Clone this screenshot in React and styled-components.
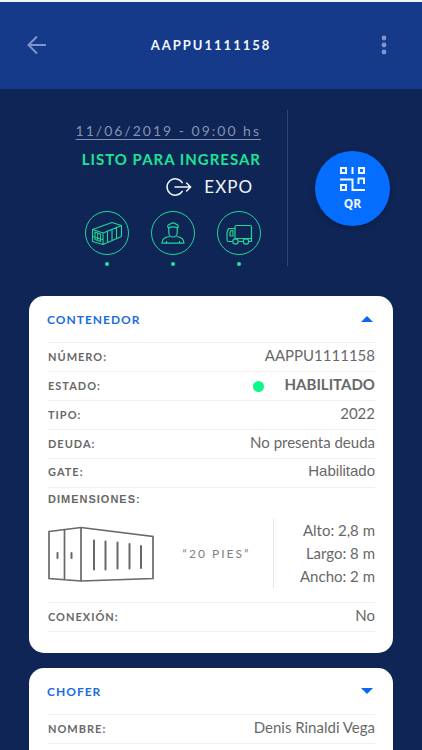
import { useState } from "react";
import styled, { createGlobalStyle } from "styled-components";

const GlobalStyle = createGlobalStyle`
  *,
  *::before,
  *::after {
    box-sizing: border-box;
  }

  body {
    margin: 0;
    background-color: #0e2556;
    font-family: Lato, "Liberation Sans", sans-serif;
  }

  button {
    font-family: inherit;
    border: none;
    background: transparent;
    padding: 0;
    cursor: pointer;
  }
`;

const driverRows = [
  { label: "NOMBRE:", value: "Denis Rinaldi Vega" },
  { label: "DNI:", value: "20978448" },
];

function ArrowLeftIcon() {
  return (
    <svg width="20" height="20" viewBox="0 0 20 20" fill="none">
      <path
        d="M19 10H1.5M10 1.500L1.500 10l8.500 8.500"
        stroke="currentColor"
        strokeWidth="2"
      />
    </svg>
  );
}

function DotsIcon() {
  return (
    <svg width="6" height="20" viewBox="0 0 6 20" fill="currentColor">
      <circle cx="3" cy="3" r="2.400" />
      <circle cx="3" cy="10" r="2.400" />
      <circle cx="3" cy="17" r="2.400" />
    </svg>
  );
}

function ExpoIcon() {
  return (
    <svg width="26" height="18" viewBox="0 0 26 18" fill="none">
      <path
        d="M16.2 4.6A8.2 8.2 0 1 0 16.2 13.4M9 9h15.5M20.6 5l4 4-4 4"
        stroke="currentColor"
        strokeWidth="1.500"
        strokeLinecap="round"
      />
    </svg>
  );
}

function ContainerIcon() {
  return (
    <svg width="42" height="42" viewBox="1 1 42 42" fill="none">
      <path
        d="M7.500 18.500L27 11.500l9.500 3v11L18 33.500 7.500 30.500zM7.500 18.500l10.500 3.500 18.500-7.500M18 22v11.500M22.500 20.500v11M27 18.500v10.500M31.500 16.800v10.500M10 21v7.500l5.500 2V23zM12.700 22v7.500M7.500 25.500l10 3"
        stroke="currentColor"
        strokeWidth="1.100"
        strokeLinejoin="round"
      />
    </svg>
  );
}

function DriverIcon() {
  return (
    <svg width="42" height="42" viewBox="1 1 42 42" fill="none">
      <path
        d="M17.500 17c-1-1-1-2.500.2-3.200 1.300-.3 2.300-2 4.300-2s3 1.700 4.300 2c1.200.7 1.200 2.200.2 3.200-2.500-1.300-6.500-1.300-9 0zM17.800 17v4.500c0 2.500 1.700 4.500 4.200 4.500s4.200-2 4.200-4.500V17M18.500 25.500c-5 .5-7.500 2.700-7.500 6.700h22c0-4-2.500-6.200-7.500-6.700M15.500 30v2.200M28.500 30v2.200"
        stroke="currentColor"
        strokeWidth="1.200"
        strokeLinejoin="round"
      />
    </svg>
  );
}

function TruckIcon() {
  return (
    <svg width="42" height="42" viewBox="1 1 42 42" fill="none">
      <g stroke="currentColor" strokeWidth="1.200" strokeLinejoin="round">
        <path d="M15.500 30.500H11.500q-1.500 0-1.500-2V22l1.500-4.500h6.500M18 27.500V16q0-1.500 1.500-1.500H33q1.500 0 1.500 1.500v11.500zM34.500 27.500v3h-3M26 30.500h-4.500M16 19.500h-2l-1 2.500v3H16z" />
        <circle cx="18.500" cy="30.500" r="2.700" />
        <circle cx="29" cy="30.500" r="2.700" />
      </g>
    </svg>
  );
}

function QrIcon() {
  return (
    <svg width="25" height="25" viewBox="0 0 25 25" fill="none">
      <path
        d="M1 1h5v5H1zM19 1h5v5h-5zM12.500 0v7M0 12.500h12.500v10.500H25M18.500 17v-5.500H24V17M1 18h5v5H1z"
        stroke="currentColor"
        strokeWidth="2"
      />
    </svg>
  );
}

function ContainerDrawing() {
  return (
    <svg width="106" height="56" viewBox="0 0 106 56" fill="none">
      <path
        d="M1 5.500l32-4 72 9v42L33 55 1 52.500zM16.500 3.500v50M33 1.500V55"
        stroke="currentColor"
        strokeWidth="1.700"
      />
      <path
        d="M9.500 27v5M23.500 27v5M46 14.500v29M57.500 15.500v28M69.500 16.500v26M81.500 18v24.500M93 20v22"
        stroke="currentColor"
        strokeWidth="2"
        strokeLinecap="round"
      />
    </svg>
  );
}

function Row({ label, value, active, plain }) {
  return (
    <StyledRow>
      <StyledLabel>{label}</StyledLabel>
      <StyledValue $strong={active} $plain={plain}>
        {active && <StyledStateDot />}
        {value}
      </StyledValue>
    </StyledRow>
  );
}

export default function App() {
  const [isContainerUp, setIsContainerUp] = useState(true);
  const [isDriverUp, setIsDriverUp] = useState(false);

  return (
    <StyledScreen>
      <GlobalStyle />
      <StyledHeader>
        <StyledIconButton aria-label="Volver">
          <ArrowLeftIcon />
        </StyledIconButton>
        <StyledTitle>AAPPU1111158</StyledTitle>
        <StyledIconButton aria-label="Más opciones" $end>
          <DotsIcon />
        </StyledIconButton>
      </StyledHeader>

      <StyledSummary>
        <StyledDetails>
          <StyledDate>11/06/2019 - 09:00 hs</StyledDate>
          <StyledStatus>LISTO PARA INGRESAR</StyledStatus>
          <StyledOperation>
            <ExpoIcon />
            EXPO
          </StyledOperation>
          <StyledSteps>
            {[ContainerIcon, DriverIcon, TruckIcon].map((StepIcon, index) => (
              <StyledStep key={index}>
                <StyledStepCircle>
                  <StepIcon />
                </StyledStepCircle>
                <StyledStepDot />
              </StyledStep>
            ))}
          </StyledSteps>
        </StyledDetails>
        <StyledQrArea>
          <StyledQrButton>
            <QrIcon />
            QR
          </StyledQrButton>
        </StyledQrArea>
      </StyledSummary>

      <StyledCards>
        <StyledCard>
          <StyledCardHeader
            aria-expanded={isContainerUp}
            onClick={() => setIsContainerUp(!isContainerUp)}
          >
            CONTENEDOR
            <StyledCaret $up={isContainerUp} />
          </StyledCardHeader>
          <StyledList>
            <Row label="NÚMERO:" value="AAPPU1111158" />
            <Row label="ESTADO:" value="HABILITADO" active />
            <Row label="TIPO:" value="2022" />
            <Row label="DEUDA:" value="No presenta deuda" />
            <Row label="GATE:" value="Habilitado" plain />
            <StyledDimensions>
              <StyledLabel $plain>DIMENSIONES:</StyledLabel>
              <StyledDimensionsBody>
                <ContainerDrawing />
                <StyledFeet>“20 PIES”</StyledFeet>
                <StyledMeasures>
                  <span>Alto: 2,8 m</span>
                  <span>Largo: 8 m</span>
                  <span>Ancho: 2 m</span>
                </StyledMeasures>
              </StyledDimensionsBody>
            </StyledDimensions>
            <Row label="CONEXIÓN:" value="No" />
          </StyledList>
        </StyledCard>

        <StyledCard>
          <StyledCardHeader
            aria-expanded={isDriverUp}
            onClick={() => setIsDriverUp(!isDriverUp)}
          >
            CHOFER
            <StyledCaret $up={isDriverUp} />
          </StyledCardHeader>
          <StyledList>
            {driverRows.map(({ label, value }) => (
              <Row key={label} label={label} value={value} />
            ))}
          </StyledList>
        </StyledCard>
      </StyledCards>
    </StyledScreen>
  );
}

const StyledScreen = styled.main`
  height: 100vh;
  overflow-y: auto;
  scrollbar-width: none;
  background-color: #0e2556;
`;

const StyledHeader = styled.header`
  display: grid;
  grid-template-columns: 1fr auto 1fr;
  align-items: center;
  padding: 33px 27px 34px;
  border-top: 2px solid #f2f6fa;
  background-color: #163a8a;
`;

const StyledIconButton = styled.button`
  display: flex;
  justify-self: ${({ $end }) => ($end ? "end" : "start")};
  padding-right: ${({ $end }) => ($end ? "8px" : "0")};
  color: #8094cf;
`;

const StyledTitle = styled.h1`
  margin: 0;
  color: #f4f7ff;
  font-size: 13px;
  font-weight: 700;
  line-height: 20px;
  letter-spacing: 2px;
`;

const StyledSummary = styled.section`
  display: flex;
  padding: 21px 32px 30px 28px;
`;

const StyledDetails = styled.div`
  flex: 1;
  display: flex;
  flex-direction: column;
  align-items: flex-end;
  padding: 7px 26px 0 0;
  line-height: 28px;
`;

const StyledDate = styled.time`
  color: #8591b2;
  font-size: 14px;
  letter-spacing: 2px;
  text-decoration: underline;
  text-decoration-thickness: 1px;
  text-underline-offset: 3px;
`;

const StyledStatus = styled.strong`
  color: #1ee394;
  font-size: 15px;
  letter-spacing: 1px;
`;

const StyledOperation = styled.span`
  display: flex;
  align-items: center;
  gap: 12px;
  padding-right: 8px;
  color: #f2f5fb;
  font-size: 17px;
  letter-spacing: 1px;
`;

const StyledSteps = styled.div`
  display: flex;
  gap: 22px;
  margin-top: 10px;
`;

const StyledStep = styled.div`
  display: flex;
  flex-direction: column;
  align-items: center;
  gap: 7px;
`;

const StyledStepCircle = styled.span`
  display: flex;
  border: 1px solid #21d796;
  border-radius: 50%;
  color: #21d796;
`;

const StyledStepDot = styled.i`
  width: 4px;
  height: 4px;
  border-radius: 50%;
  background-color: #2be39c;
`;

const StyledQrArea = styled.div`
  display: flex;
  align-items: center;
  padding-left: 27px;
  border-left: 1px solid #32456f;
`;

const StyledQrButton = styled.button`
  display: flex;
  flex-direction: column;
  align-items: center;
  justify-content: center;
  gap: 5px;
  width: 75px;
  height: 75px;
  padding-top: 2px;
  border-radius: 50%;
  background-color: #056dff;
  box-shadow: 0 2px 6px rgba(0, 0, 0, 0.2);
  color: #f4f9ff;
  font-family: "Open Sans", sans-serif;
  font-size: 12px;
  font-weight: 700;
  line-height: 14px;
`;

const StyledCards = styled.div`
  display: flex;
  flex-direction: column;
  gap: 15px;
  padding: 0 29px 30px;
`;

const StyledCard = styled.section`
  padding: 0 18px 21px;
  border-radius: 15px;
  background-color: #fff;
`;

const StyledCardHeader = styled.button`
  display: flex;
  align-items: center;
  justify-content: space-between;
  width: 100%;
  height: 46px;
  padding-right: 2px;
  color: #1a6ce4;
  font-size: 12px;
  font-weight: 700;
  letter-spacing: 1px;
`;

const StyledCaret = styled.span`
  border-left: 6px solid transparent;
  border-right: 6px solid transparent;
  border-bottom: ${({ $up }) => ($up ? "6px solid #0c66ee" : "none")};
  border-top: ${({ $up }) => ($up ? "none" : "6px solid #0c66ee")};
`;

const StyledList = styled.dl`
  margin: 0 0 0 1px;
  border-top: 1px solid #f0f0f0;
  color: #686868;
`;

const StyledRow = styled.div`
  display: flex;
  align-items: baseline;
  justify-content: space-between;
  height: 29px;
  padding-top: 2px;
  border-bottom: 1px solid #f0f0f0;
`;

const StyledLabel = styled.dt`
  font-family: ${({ $plain }) =>
    $plain ? '"Liberation Sans", sans-serif' : "inherit"};
  font-size: 11px;
  font-weight: 700;
  line-height: 22px;
  letter-spacing: 1px;
`;

const StyledValue = styled.dd`
  margin: 0;
  font-family: ${({ $plain }) =>
    $plain ? '"Liberation Sans", sans-serif' : "inherit"};
  font-size: 15px;
  font-weight: ${({ $strong }) => ($strong ? 700 : 400)};
  line-height: 20px;
`;

const StyledStateDot = styled.i`
  display: inline-block;
  width: 11px;
  height: 11px;
  margin-right: 21px;
  border-radius: 50%;
  background-color: #0df88b;
  vertical-align: -2px;
`;

const StyledDimensions = styled.div`
  padding-bottom: 14px;
  border-bottom: 1px solid #f0f0f0;
`;

const StyledDimensionsBody = styled.dd`
  display: flex;
  align-items: center;
  justify-content: space-between;
  margin: 9px 0 0;
`;

const StyledFeet = styled.span`
  padding-left: 6px;
  color: #808080;
  font-size: 12px;
  letter-spacing: 2px;
`;

const StyledMeasures = styled.div`
  display: flex;
  flex-direction: column;
  align-items: flex-end;
  padding-left: 26px;
  border-left: 1px solid #e6e6e6;
  font-size: 15px;
  line-height: 23px;
`;
